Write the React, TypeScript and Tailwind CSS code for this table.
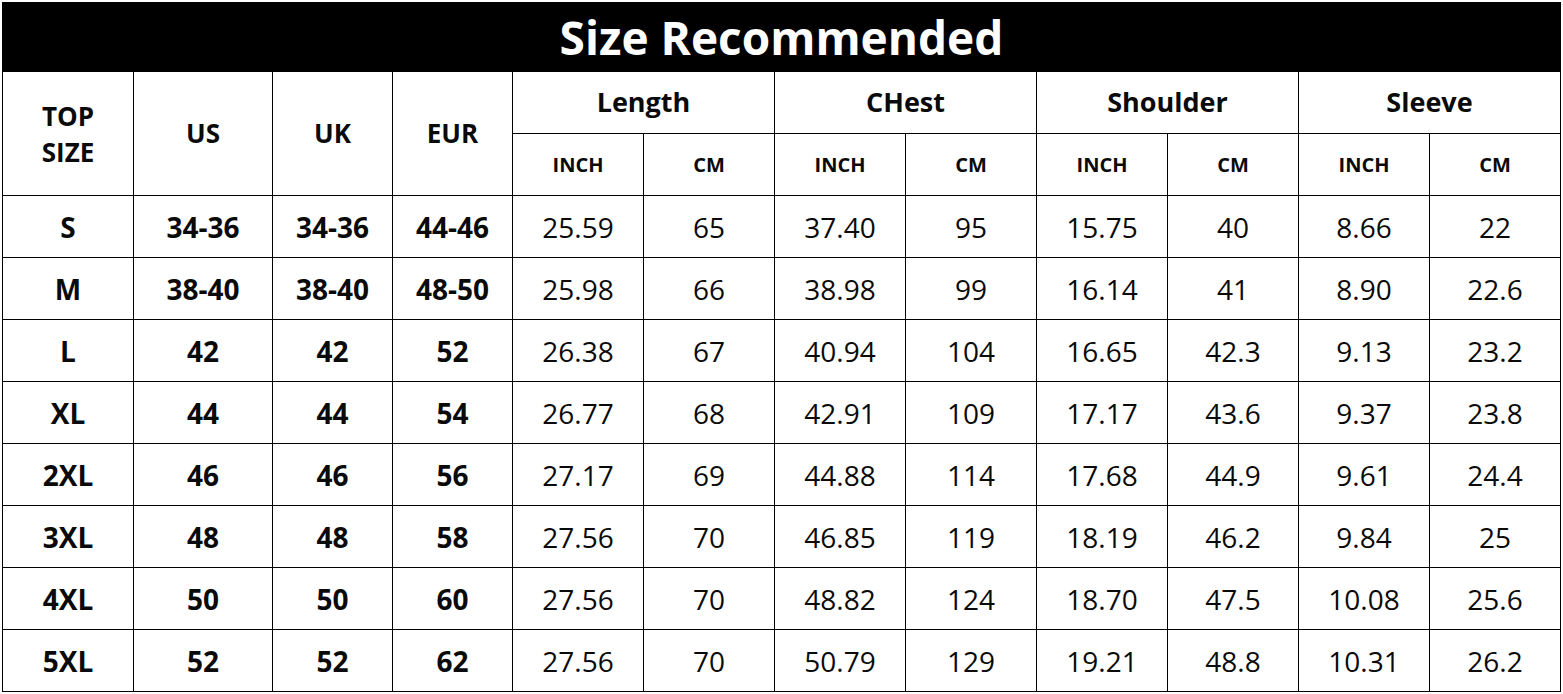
import React from 'react'

const font = { fontFamily: '"Open Sans", "Noto Sans", sans-serif' }

const groups = ['Length', 'CHest', 'Shoulder', 'Sleeve']

const rows = [
  ['S', '34-36', '34-36', '44-46', '25.59', '65', '37.40', '95', '15.75', '40', '8.66', '22'],
  ['M', '38-40', '38-40', '48-50', '25.98', '66', '38.98', '99', '16.14', '41', '8.90', '22.6'],
  ['L', '42', '42', '52', '26.38', '67', '40.94', '104', '16.65', '42.3', '9.13', '23.2'],
  ['XL', '44', '44', '54', '26.77', '68', '42.91', '109', '17.17', '43.6', '9.37', '23.8'],
  ['2XL', '46', '46', '56', '27.17', '69', '44.88', '114', '17.68', '44.9', '9.61', '24.4'],
  ['3XL', '48', '48', '58', '27.56', '70', '46.85', '119', '18.19', '46.2', '9.84', '25'],
  ['4XL', '50', '50', '60', '27.56', '70', '48.82', '124', '18.70', '47.5', '10.08', '25.6'],
  ['5XL', '52', '52', '62', '27.56', '70', '50.79', '129', '19.21', '48.8', '10.31', '26.2'],
]

const cell = 'flex items-center justify-center bg-white text-[#0a0a0a]'

export default function App() {
  return (
    <div className="min-h-screen bg-white pl-[2px] pt-[2px]" style={font}>
      <div className="grid w-[1559px] grid-cols-[130px_138px_119px_119px_repeat(8,130px)] grid-rows-[68px_repeat(10,61px)] gap-px bg-black p-px">
        <div className="col-span-12 flex items-center justify-center bg-black text-[46px] font-bold leading-none text-white">
          Size Recommended
        </div>

        <div className={`${cell} row-span-2 flex-col text-[26px] font-bold leading-[36px]`}>
          <span>TOP</span>
          <span>SIZE</span>
        </div>
        <div className={`${cell} row-span-2 text-[26px] font-bold`}>US</div>
        <div className={`${cell} row-span-2 text-[26px] font-bold`}>UK</div>
        <div className={`${cell} row-span-2 text-[26px] font-bold`}>EUR</div>
        {groups.map((g) => (
          <div key={g} className={`${cell} col-span-2 text-[27px] font-bold`}>
            {g}
          </div>
        ))}
        {groups.map((g) => (
          <React.Fragment key={g}>
            <div className={`${cell} text-[20px] font-bold`}>INCH</div>
            <div className={`${cell} text-[20px] font-bold`}>CM</div>
          </React.Fragment>
        ))}

        {rows.map((r) =>
          r.map((v, i) => (
            <div
              key={`${r[0]}-${i}`}
              className={`${cell} text-[28px] ${i < 4 ? 'font-bold' : 'font-normal'}`}
            >
              {v}
            </div>
          )),
        )}
      </div>
    </div>
  )
}
